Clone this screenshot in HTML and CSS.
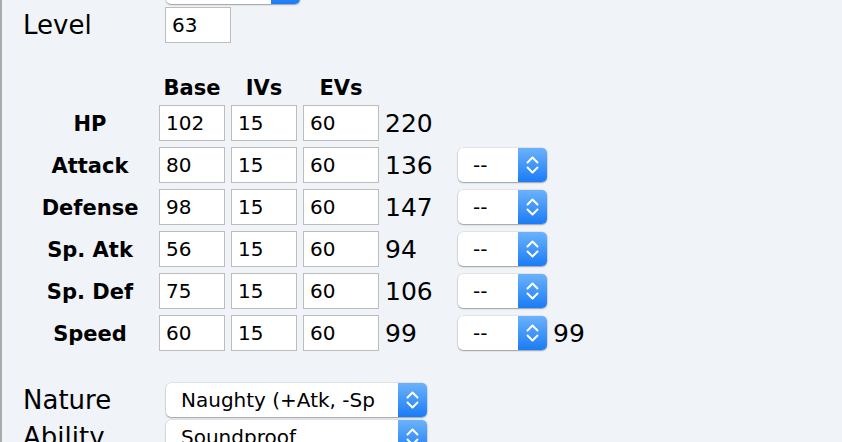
FILE: index.html
```html
<!DOCTYPE html>
<html lang="en">
<head>
    <meta charset="UTF-8">
    <meta name="viewport" content="width=device-width, initial-scale=1.0">
    <title>Stats Calculator</title>
    <link rel="stylesheet" href="styles.css">
</head>
<body>
    <div class="panel">
        <div class="field top-field">
            <span class="field-label"></span>
            <span class="select select-top">
                <select><option>Exploud</option></select>
                <svg class="arrows" viewBox="0 0 29 34"><path d="M9.5 14.5 14.5 9.5 19.5 14.5M9.5 19.5 14.5 24.5 19.5 19.5"/></svg>
            </span>
        </div>

        <div class="field level-field">
            <label class="field-label" for="level">Level</label>
            <input class="num level-input" id="level" type="text" value="63">
        </div>

        <div class="stats">
            <span></span>
            <span class="col-head">Base</span>
            <span class="col-head">IVs</span>
            <span class="col-head">EVs</span>
            <span></span><span></span><span></span>

            <span class="stat-name">HP</span>
            <input class="num" type="text" value="102">
            <input class="num" type="text" value="15">
            <input class="num" type="text" value="60">
            <span class="stat-total">220</span>
            <span></span><span></span>

            <span class="stat-name">Attack</span>
            <input class="num" type="text" value="80">
            <input class="num" type="text" value="15">
            <input class="num" type="text" value="60">
            <span class="stat-total">136</span>
            <span class="select"><select><option>--</option></select><svg class="arrows" viewBox="0 0 29 34"><path d="M9.5 14.5 14.5 9.5 19.5 14.5M9.5 19.5 14.5 24.5 19.5 19.5"/></svg></span>
            <span></span>

            <span class="stat-name">Defense</span>
            <input class="num" type="text" value="98">
            <input class="num" type="text" value="15">
            <input class="num" type="text" value="60">
            <span class="stat-total">147</span>
            <span class="select"><select><option>--</option></select><svg class="arrows" viewBox="0 0 29 34"><path d="M9.5 14.5 14.5 9.5 19.5 14.5M9.5 19.5 14.5 24.5 19.5 19.5"/></svg></span>
            <span></span>

            <span class="stat-name">Sp. Atk</span>
            <input class="num" type="text" value="56">
            <input class="num" type="text" value="15">
            <input class="num" type="text" value="60">
            <span class="stat-total">94</span>
            <span class="select"><select><option>--</option></select><svg class="arrows" viewBox="0 0 29 34"><path d="M9.5 14.5 14.5 9.5 19.5 14.5M9.5 19.5 14.5 24.5 19.5 19.5"/></svg></span>
            <span></span>

            <span class="stat-name">Sp. Def</span>
            <input class="num" type="text" value="75">
            <input class="num" type="text" value="15">
            <input class="num" type="text" value="60">
            <span class="stat-total">106</span>
            <span class="select"><select><option>--</option></select><svg class="arrows" viewBox="0 0 29 34"><path d="M9.5 14.5 14.5 9.5 19.5 14.5M9.5 19.5 14.5 24.5 19.5 19.5"/></svg></span>
            <span></span>

            <span class="stat-name">Speed</span>
            <input class="num" type="text" value="60">
            <input class="num" type="text" value="15">
            <input class="num" type="text" value="60">
            <span class="stat-total">99</span>
            <span class="select"><select><option>--</option></select><svg class="arrows" viewBox="0 0 29 34"><path d="M9.5 14.5 14.5 9.5 19.5 14.5M9.5 19.5 14.5 24.5 19.5 19.5"/></svg></span>
            <span class="stat-total">99</span>
        </div>

        <div class="field nature-field">
            <label class="field-label">Nature</label>
            <span class="select select-long">
                <select><option>Naughty (+Atk, -SpD)</option></select>
                <svg class="arrows" viewBox="0 0 29 34"><path d="M9.5 14.5 14.5 9.5 19.5 14.5M9.5 19.5 14.5 24.5 19.5 19.5"/></svg>
            </span>
        </div>

        <div class="field ability-field">
            <label class="field-label">Ability</label>
            <span class="select select-long">
                <select><option>Soundproof</option></select>
                <svg class="arrows" viewBox="0 0 29 34"><path d="M9.5 14.5 14.5 9.5 19.5 14.5M9.5 19.5 14.5 24.5 19.5 19.5"/></svg>
            </span>
        </div>
    </div>
</body>
</html>
```

FILE: styles.css
```css
html,
body {
    overflow: hidden;
}

body {
    margin: 0;
    background-color: #f0f3f8;
    font-family: "DejaVu Sans", Verdana, sans-serif;
    color: #000;
}

.panel {
    border-left: 2px solid #aaaaaa;
    padding-left: 21px;
    min-height: 100vh;
}

/* label + control rows */
.field {
    display: grid;
    grid-template-columns: 142px auto;
    align-items: center;
    justify-items: start;
}

.field-label {
    font-size: 26px;
}

.top-field {
    margin-top: -30px;
}

.level-field {
    margin-top: 3px;
}

.nature-field {
    margin-top: 32px;
}

.ability-field {
    margin-top: 3px;
}

/* stats table */
.stats {
    display: grid;
    grid-template-columns: 130px 66px 66px 76px 67px 89px auto;
    grid-template-rows: 23px;
    grid-auto-rows: 36px;
    column-gap: 6px;
    row-gap: 6px;
    align-items: center;
    margin-top: 33px;
}

.col-head {
    font-size: 21px;
    font-weight: bold;
    line-height: 21px;
    padding-top: 2px;
    text-align: center;
}

.stat-name {
    font-size: 21px;
    font-weight: bold;
    text-align: center;
    padding-left: 4px;
    padding-top: 1px;
}

.stat-total {
    font-size: 25px;
}

.num {
    box-sizing: border-box;
    width: 100%;
    height: 36px;
    margin: 0;
    padding: 0 6px;
    border: 1px solid #bdbdbd;
    border-radius: 0;
    background: white;
    font-family: inherit;
    font-size: 20px;
    color: #000;
    outline: none;
}

.level-input {
    width: 66px;
}

/* mac style popup buttons */
.select {
    position: relative;
    display: block;
    height: 34px;
    border-radius: 5px;
    background: white;
    box-shadow: 0 0 0 0.5px rgba(0, 0, 0, 0.12), 0 1px 1.5px rgba(0, 0, 0, 0.3);
}

.select select {
    -webkit-appearance: none;
    appearance: none;
    box-sizing: border-box;
    width: 100%;
    height: 100%;
    margin: 0;
    padding: 0 34px 0 15px;
    border: none;
    border-radius: 5px;
    background: transparent;
    font-family: inherit;
    font-size: 20px;
    color: #000;
    outline: none;
}

.select-top {
    width: 134px;
    margin-left: 1px;
}

.select-long {
    width: 261px;
    margin-left: 1px;
}

.select-long select {
    padding-right: 52px;
}

.arrows {
    position: absolute;
    top: 0;
    right: 0;
    width: 29px;
    height: 100%;
    border-radius: 0 5px 5px 0;
    background: linear-gradient(#6bb2fb, #1b7cf6);
    pointer-events: none;
}

.arrows path {
    fill: none;
    stroke: white;
    stroke-width: 2;
    stroke-linecap: round;
    stroke-linejoin: round;
}
```
